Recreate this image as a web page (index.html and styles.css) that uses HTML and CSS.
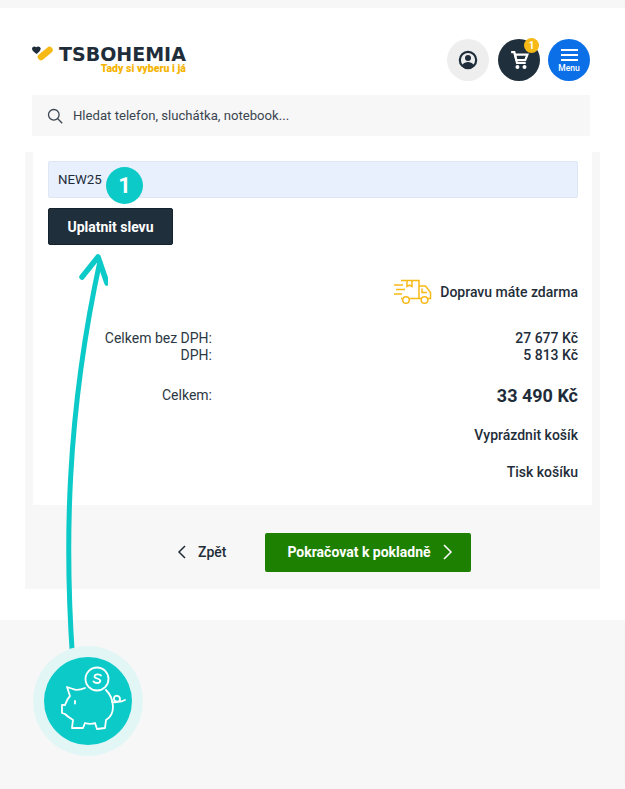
FILE: index.html
```html
<!DOCTYPE html>
<html lang="cs">
<head>
<meta charset="utf-8">
<title>TSBOHEMIA</title>
<link rel="stylesheet" href="styles.css">
</head>
<body>
<div class="page">
  <header class="header">
    <div class="topbar">
      <div class="logo">
        <svg class="logo-mark" width="22" height="16" viewBox="0 0 22 16">
          <path d="M0 2.800C0 .8 2.400 -.3 4.200 1.200c1.500-1.200 4.300-.6 4.500 1.400.2 1.700-2 3.900-4.100 5.400C2.400 6.400 0 4.800 0 2.800Z" fill="#1f2d3a"/>
          <path d="M9 11 17.500 4" stroke="#f7b916" stroke-width="6.500" stroke-linecap="round" fill="none"/>
        </svg>
        <div class="logo-text">
          <div class="logo-name">TSBOHEMIA</div>
          <div class="logo-tag">Tady si vyberu i já</div>
        </div>
      </div>
      <div class="actions">
        <div class="circle circle-user">
          <svg width="20" height="20" viewBox="0 0 22 22">
            <circle cx="11" cy="11" r="9" fill="none" stroke="#1f2d3a" stroke-width="2.400"/>
            <circle cx="11" cy="8.800" r="3.300" fill="#1f2d3a"/>
            <path d="M4.800 16.500c1.500-2.400 3.700-3.300 6.200-3.300s4.700.9 6.200 3.300c-1.500 1.900-3.700 3-6.200 3s-4.700-1.100-6.200-3Z" fill="#1f2d3a"/>
          </svg>
        </div>
        <div class="circle circle-cart">
          <svg width="19" height="20" viewBox="0 0 22 24">
            <path d="M1 2.500h3.800l3.200 13h10.500" fill="none" stroke="#fff" stroke-width="2.600"/>
            <path d="M5.500 5.500H20.500L18 12H7.200Z" fill="none" stroke="#fff" stroke-width="2.600"/>
            <circle cx="8.500" cy="20.500" r="2.400" fill="#fff"/>
            <circle cx="17" cy="20.500" r="2.400" fill="#fff"/>
          </svg>
          <span class="cart-badge">1</span>
        </div>
        <div class="circle circle-menu">
          <span class="menu-lines"><i></i><i></i><i></i></span>
          <span class="menu-label">Menu</span>
        </div>
      </div>
    </div>
    <div class="search">
      <svg width="16" height="16" viewBox="0 0 16 16">
        <circle cx="6.800" cy="6.800" r="5.300" fill="none" stroke="#3b4650" stroke-width="1.300"/>
        <path d="m10.800 10.800 4.400 4.400" stroke="#3b4650" stroke-width="1.300"/>
      </svg>
      <span>Hledat telefon, sluchátka, notebook...</span>
    </div>
  </header>

  <main class="main">
    <section class="card">
      <div class="coupon-input">NEW25</div>
      <button class="btn-dark">Uplatnit slevu</button>

      <div class="shipping">
        <svg width="39" height="26" viewBox="0 0 39 26" fill="none" stroke="#f7b916" stroke-width="1.500">
          <path d="M8 1.500h18v18H17M26 7h6.500l5 6.500v6H35M26 19.500h2M8 19.500h1"/>
          <circle cx="13" cy="21" r="3.300"/>
          <circle cx="31.500" cy="21" r="3.300"/>
          <path d="M14 1.500v6l2.500-1.500 2.500 1.500v-6M1 6h9M3 10.500h9M1 15h8"/>
          <path d="M29 9.500v4h5"/>
        </svg>
        <span>Dopravu máte zdarma</span>
      </div>

      <div class="totals">
        <span class="label">Celkem bez DPH:</span><span class="value">27 677 Kč</span>
        <span class="label">DPH:</span><span class="value">5 813 Kč</span>
      </div>
      <div class="grand">
        <span class="label">Celkem:</span><span class="grand-value">33 490 Kč</span>
      </div>
      <div class="card-link card-link-first">Vyprázdnit košík</div>
      <div class="card-link card-link-second">Tisk košíku</div>
    </section>

    <div class="checkout">
      <div class="back">
        <svg width="10" height="14" viewBox="0 0 10 14"><path d="M8 1 2 7l6 6" fill="none" stroke="#1f2d3a" stroke-width="1.500"/></svg>
        <span>Zpět</span>
      </div>
      <button class="btn-green">
        <span>Pokračovat k pokladně</span>
        <svg width="11" height="16" viewBox="0 0 11 16"><path d="m2 1 7 7-7 7" fill="none" stroke="#fff" stroke-width="1.500"/></svg>
      </button>
    </div>
  </main>
</div>

<svg class="arrow" width="60" height="420" viewBox="0 0 60 420">
  <path d="M24.500 410C17 300 18 170 52 14" fill="none" stroke="#0ccac8" stroke-width="5"/>
  <path d="M34 30 50 10l9 26" fill="none" stroke="#0ccac8" stroke-width="5.500" stroke-linecap="round" stroke-linejoin="round"/>
</svg>
<div class="step-badge">1</div>
<div class="piggy-halo">
  <div class="piggy">
    <svg width="88" height="88" viewBox="0 0 88 88" fill="none" stroke="#fff" stroke-width="1.800" stroke-linejoin="round" stroke-linecap="round">
      <circle cx="53" cy="22" r="11.500"/>
      <path d="M57 18.500c-1-1.500-6-2-6.500.8-.4 2.700 6 1.700 5.800 4.700-.2 2.800-5.500 2.300-6.800.5"/>
      <path d="M41 31C36 33 31 33 29 32L23 30 26 39C23 42 22 45 21 48H18V56L21 57C24 60 26 61 29 63L28 71H39L41 66C44 67 48 67 51 66L53 72 61 71 62 63C67 60 69 55 69 50 69 43 66 37 62 33"/>
      <path d="M68 45c4 1 8 0 8-3s-5-5-6-1 5 5 11 2"/>
      <path d="M31 44v2.500"/>
    </svg>
  </div>
</div>
</body>
</html>
```
FILE: styles.css
```css
* { box-sizing: border-box; }
html, body { margin: 0; }
body {
  position: relative;
  width: 625px;
  height: 789px;
  overflow: hidden;
  padding-top: 8px;
  background: #f7f7f7;
  font-family: Roboto, "Liberation Sans", sans-serif;
  color: #1f2d3a;
}
.page { height: 612px; background: #fff; }
.header { height: 144px; padding: 31px 35px 0 32px; }
.topbar { display: flex; justify-content: space-between; align-items: flex-start; height: 42px; }
.logo { display: flex; align-items: flex-start; padding-top: 7px; }
.logo-mark { margin-right: 5px; }
.logo-text { display: flex; flex-direction: column; }
.logo-name {
  font-family: "DejaVu Sans", sans-serif;
  font-weight: 700;
  font-size: 19px;
  line-height: 16px;
  color: #1f2d3a;
}
.logo-tag {
  align-self: flex-end;
  margin-top: 1px;
  font-size: 10.500px;
  line-height: 12px;
  font-weight: 900;
  color: #f5b400;
}
.actions { display: flex; gap: 9px; }
.circle {
  position: relative;
  width: 42px;
  height: 42px;
  border-radius: 50%;
  display: flex;
  flex-direction: column;
  align-items: center;
  justify-content: center;
}
.circle-user { background: #eeeeee; }
.circle-cart { background: #1f2f3b; }
.circle-menu { background: #0b6fe8; color: #fff; margin-left: -1px; }
.cart-badge {
  position: absolute;
  top: -1px;
  right: 1px;
  width: 15px;
  height: 15px;
  border-radius: 50%;
  background: #f7b916;
  color: #fff;
  font-size: 10px;
  font-weight: 700;
  line-height: 15px;
  text-align: center;
}
.menu-lines { display: flex; flex-direction: column; gap: 3px; width: 17px; margin-top: 2px; }
.menu-lines i { display: block; height: 2px; background: #fff; }
.menu-label { font-size: 8.500px; line-height: 10px; font-weight: 500; margin-top: 2px; }
.search {
  display: flex;
  align-items: center;
  gap: 10px;
  height: 41px;
  margin-top: 14px;
  padding-left: 15px;
  background: #f7f7f7;
  font-size: 13.150px;
  color: #3b4650;
}
.main { height: 437px; margin: 0 25px; background: #f7f7f7; padding: 0 8px; }
.card { height: 353px; background: #fff; padding: 9px 14px 0 15px; }
.coupon-input {
  height: 37px;
  padding-left: 9px;
  background: #e8f0fe;
  border: 1px solid #dfe7f5;
  border-radius: 2px;
  font-size: 13.300px;
  line-height: 35px;
  color: #1f2d3a;
}
.btn-dark {
  display: block;
  width: 125px;
  height: 37px;
  margin-top: 10px;
  border: 1px solid #16222c;
  border-radius: 2px;
  background: #1f2f3b;
  color: #fff;
  font: 700 14px Roboto, sans-serif;
}
.shipping {
  display: flex;
  justify-content: flex-end;
  align-items: center;
  gap: 8px;
  margin-top: 33px;
  height: 28px;
  font-size: 14px;
  font-weight: 500;
}
.totals {
  display: grid;
  grid-template-columns: 164px 1fr;
  margin-top: 24px;
  font-size: 14px;
  line-height: 17px;
}
.label { text-align: right; font-size: 14px; color: #2c3843; }
.value { text-align: right; font-weight: 500; }
.grand {
  display: grid;
  grid-template-columns: 164px 1fr;
  align-items: center;
  margin-top: 20px;
  height: 22px;
}
.grand-value { text-align: right; font-size: 18px; font-weight: 700; }
.card-link { text-align: right; font-size: 14px; font-weight: 500; line-height: 17px; }
.card-link-first { margin-top: 21px; }
.card-link-second { margin-top: 20px; }
.checkout {
  display: flex;
  align-items: center;
  height: 84px;
  padding: 21px 0 11px 144px;
}
.back {
  display: flex;
  align-items: center;
  gap: 11px;
  width: 88px;
  font-size: 14px;
  font-weight: 500;
}
.btn-green {
  display: flex;
  align-items: center;
  justify-content: center;
  gap: 11px;
  width: 206px;
  height: 39px;
  padding-right: 2px;
  border: 0;
  border-radius: 2px;
  background: #1e8000;
  color: #fff;
  font: 700 14px Roboto, sans-serif;
}
.arrow { position: absolute; left: 48px; top: 247px; }
.step-badge {
  position: absolute;
  left: 106px;
  top: 167px;
  width: 37px;
  height: 37px;
  border-radius: 50%;
  background: #0ccac8;
  color: #fff;
  font-size: 22px;
  font-weight: 700;
  line-height: 37px;
  text-align: center;
}
.piggy-halo {
  position: absolute;
  left: 33px;
  top: 646px;
  width: 110px;
  height: 110px;
  padding: 11px;
  border-radius: 50%;
  background: #e3f6f6;
}
.piggy { width: 88px; height: 88px; border-radius: 50%; background: #0ccac8; }
```
